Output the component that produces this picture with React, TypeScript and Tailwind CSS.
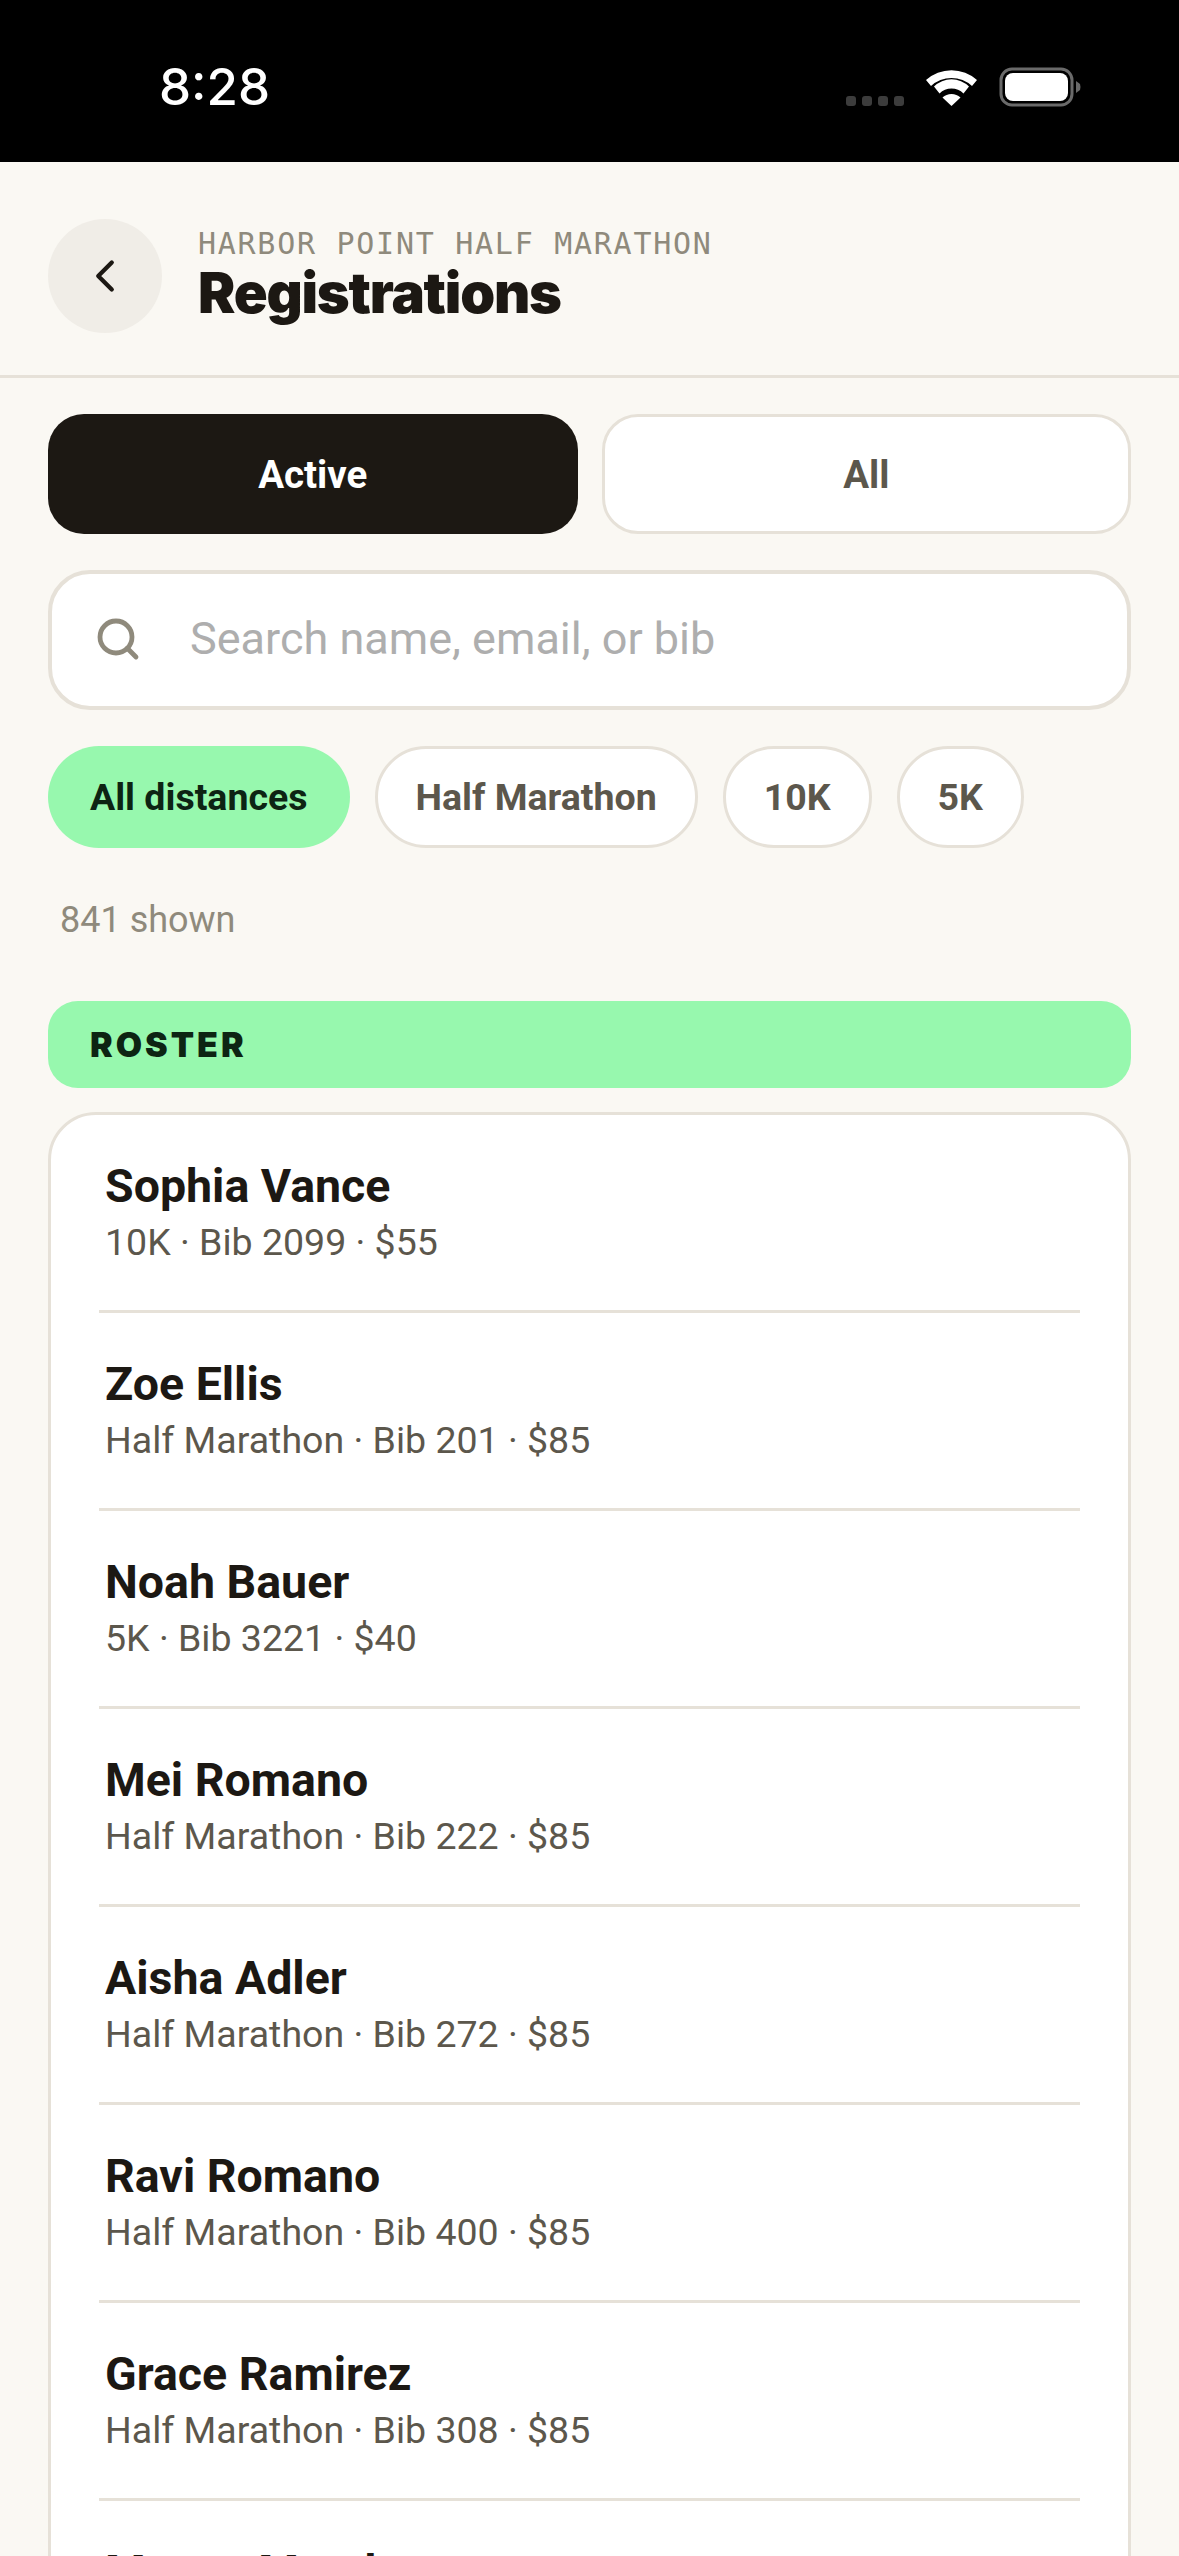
import { ChevronLeft, Search } from "lucide-react";

const rows = [
  { name: "Sophia Vance", meta: "10K · Bib 2099 · $55" },
  { name: "Zoe Ellis", meta: "Half Marathon · Bib 201 · $85" },
  { name: "Noah Bauer", meta: "5K · Bib 3221 · $40" },
  { name: "Mei Romano", meta: "Half Marathon · Bib 222 · $85" },
  { name: "Aisha Adler", meta: "Half Marathon · Bib 272 · $85" },
  { name: "Ravi Romano", meta: "Half Marathon · Bib 400 · $85" },
  { name: "Grace Ramirez", meta: "Half Marathon · Bib 308 · $85" },
  { name: "Mason Marsh", meta: "Half Marathon · Bib 118 · $85" },
];

const chips = ["Half Marathon", "10K", "5K"];

const StatusBar = () => (
  <div className="h-[162px] bg-black flex items-start justify-between pl-[159px] pr-[98px]">
    <span className="mt-[60px] text-[51px] leading-[54px] font-medium text-white font-['Inter',sans-serif]">
      8:28
    </span>
    <div className="flex items-end gap-[22px] mt-[68px] h-[38px]">
      <div className="flex gap-[6px]">
        <span className="w-[10px] h-[10px] rounded-[3px] bg-[#3c3c3c]" />
        <span className="w-[10px] h-[10px] rounded-[3px] bg-[#3c3c3c]" />
        <span className="w-[10px] h-[10px] rounded-[3px] bg-[#3c3c3c]" />
        <span className="w-[10px] h-[10px] rounded-[3px] bg-[#3c3c3c]" />
      </div>
      <svg width="51" height="37" viewBox="0 0 51 37">
        <path d="M25.5 37 L16.5 28.5 A13 13 0 0 1 34.5 28.5 Z" fill="#fff" />
        <path d="M8 17.5 A25 25 0 0 1 43 17.5 L37.5 24.5 A17 17 0 0 0 13.5 24.5 Z" fill="#fff" />
        <path d="M0 11 A38 38 0 0 1 51 11 L46 17 A30 30 0 0 0 5 17 Z" fill="#fff" />
      </svg>
      <svg width="82" height="40" viewBox="0 0 82 40" className="mb-[-1px]">
        <rect x="2" y="2" width="71" height="36" rx="11" fill="none" stroke="#6a6a6a" strokeWidth="3" />
        <rect x="6" y="6" width="63" height="28" rx="8" fill="#fff" />
        <path d="M77 14 L81 17 Q82 20 81 23 L77 26 Z" fill="#6a6a6a" />
      </svg>
    </div>
  </div>
);

const Header = () => (
  <div className="h-[216px] border-b-[3px] border-[#e6e1d8] flex items-center gap-[36px] px-[48px] pt-[15px]">
    <div className="w-[114px] h-[114px] rounded-full bg-[#f0ede7] flex items-center justify-center">
      <ChevronLeft size={54} strokeWidth={1.9} color="#1c1813" />
    </div>
    <div className="flex flex-col -mt-[3px]">
      <span className="font-['DejaVu_Sans_Mono',monospace] text-[30px] leading-[36px] tracking-[1.73px] text-[#8f8a7c]">
        HARBOR POINT HALF MARATHON
      </span>
      <span className="mt-[1px] font-['Inter',sans-serif] font-black text-[56px] leading-[60px] tracking-[-1.2px] text-[#1c1813]">
        Registrations
      </span>
    </div>
  </div>
);

const App = () => (
  <div className="w-[1179px] h-[2556px] overflow-hidden bg-[#faf8f3] font-['Roboto',sans-serif]">
    <StatusBar />
    <Header />
    <div className="px-[48px] pt-[36px] flex flex-col">
      <div className="grid grid-cols-2 gap-[24px]">
        <button className="h-[120px] pt-[2px] rounded-[36px] bg-[#1c1813] text-white text-[38.5px] font-bold">
          Active
        </button>
        <button className="h-[120px] pt-[2px] rounded-[36px] bg-white border-[3px] border-[#e6e1d8] text-[#5c574c] text-[38.5px] font-bold">
          All
        </button>
      </div>
      <div className="mt-[36px] h-[140px] rounded-[42px] bg-white border-[4px] border-[#e6e1d8] flex items-center pl-[42px] gap-[48px] pb-[2px]">
        <Search size={48} strokeWidth={2.4} color="#8f8a7c" />
        <span className="text-[45px] text-[#aeaeae]">Search name, email, or bib</span>
      </div>
      <div className="mt-[36px] flex gap-[25px]">
        <div className="h-[102px] px-[42px] rounded-full bg-[#97f8ae] flex items-center text-[37.5px] font-bold text-[#0d2413]">
          All distances
        </div>
        {chips.map((chip) => (
          <div
            key={chip}
            className="h-[102px] px-[38px] rounded-full bg-white border-[3px] border-[#e6e1d8] flex items-center text-[37.5px] font-bold text-[#5c574c]"
          >
            {chip}
          </div>
        ))}
      </div>
      <p className="mt-[50px] ml-[12px] text-[36px] leading-[44px] text-[#8f8a7c]">841 shown</p>
      <div className="mt-[59px] h-[87px] rounded-[30px] bg-[#97f8ae] flex items-center px-[42px]">
        <span className="font-['Inter',sans-serif] font-black text-[34px] tracking-[3px] text-[#0d2413]">
          ROSTER
        </span>
      </div>
      <div className="mt-[24px] rounded-[48px] bg-white border-[3px] border-[#e6e1d8] px-[48px]">
        {rows.map((row) => (
          <div key={row.name} className="h-[198px] border-b-[3px] border-[#e6e1d8] pt-[44px]">
            <div className="px-[6px] text-[46.5px] leading-[54px] font-bold text-[#1c1813]">{row.name}</div>
            <div className="px-[6px] mt-[4px] text-[37.5px] leading-[50px] text-[#5c574c]">{row.meta}</div>
          </div>
        ))}
      </div>
    </div>
  </div>
);

export default App;
